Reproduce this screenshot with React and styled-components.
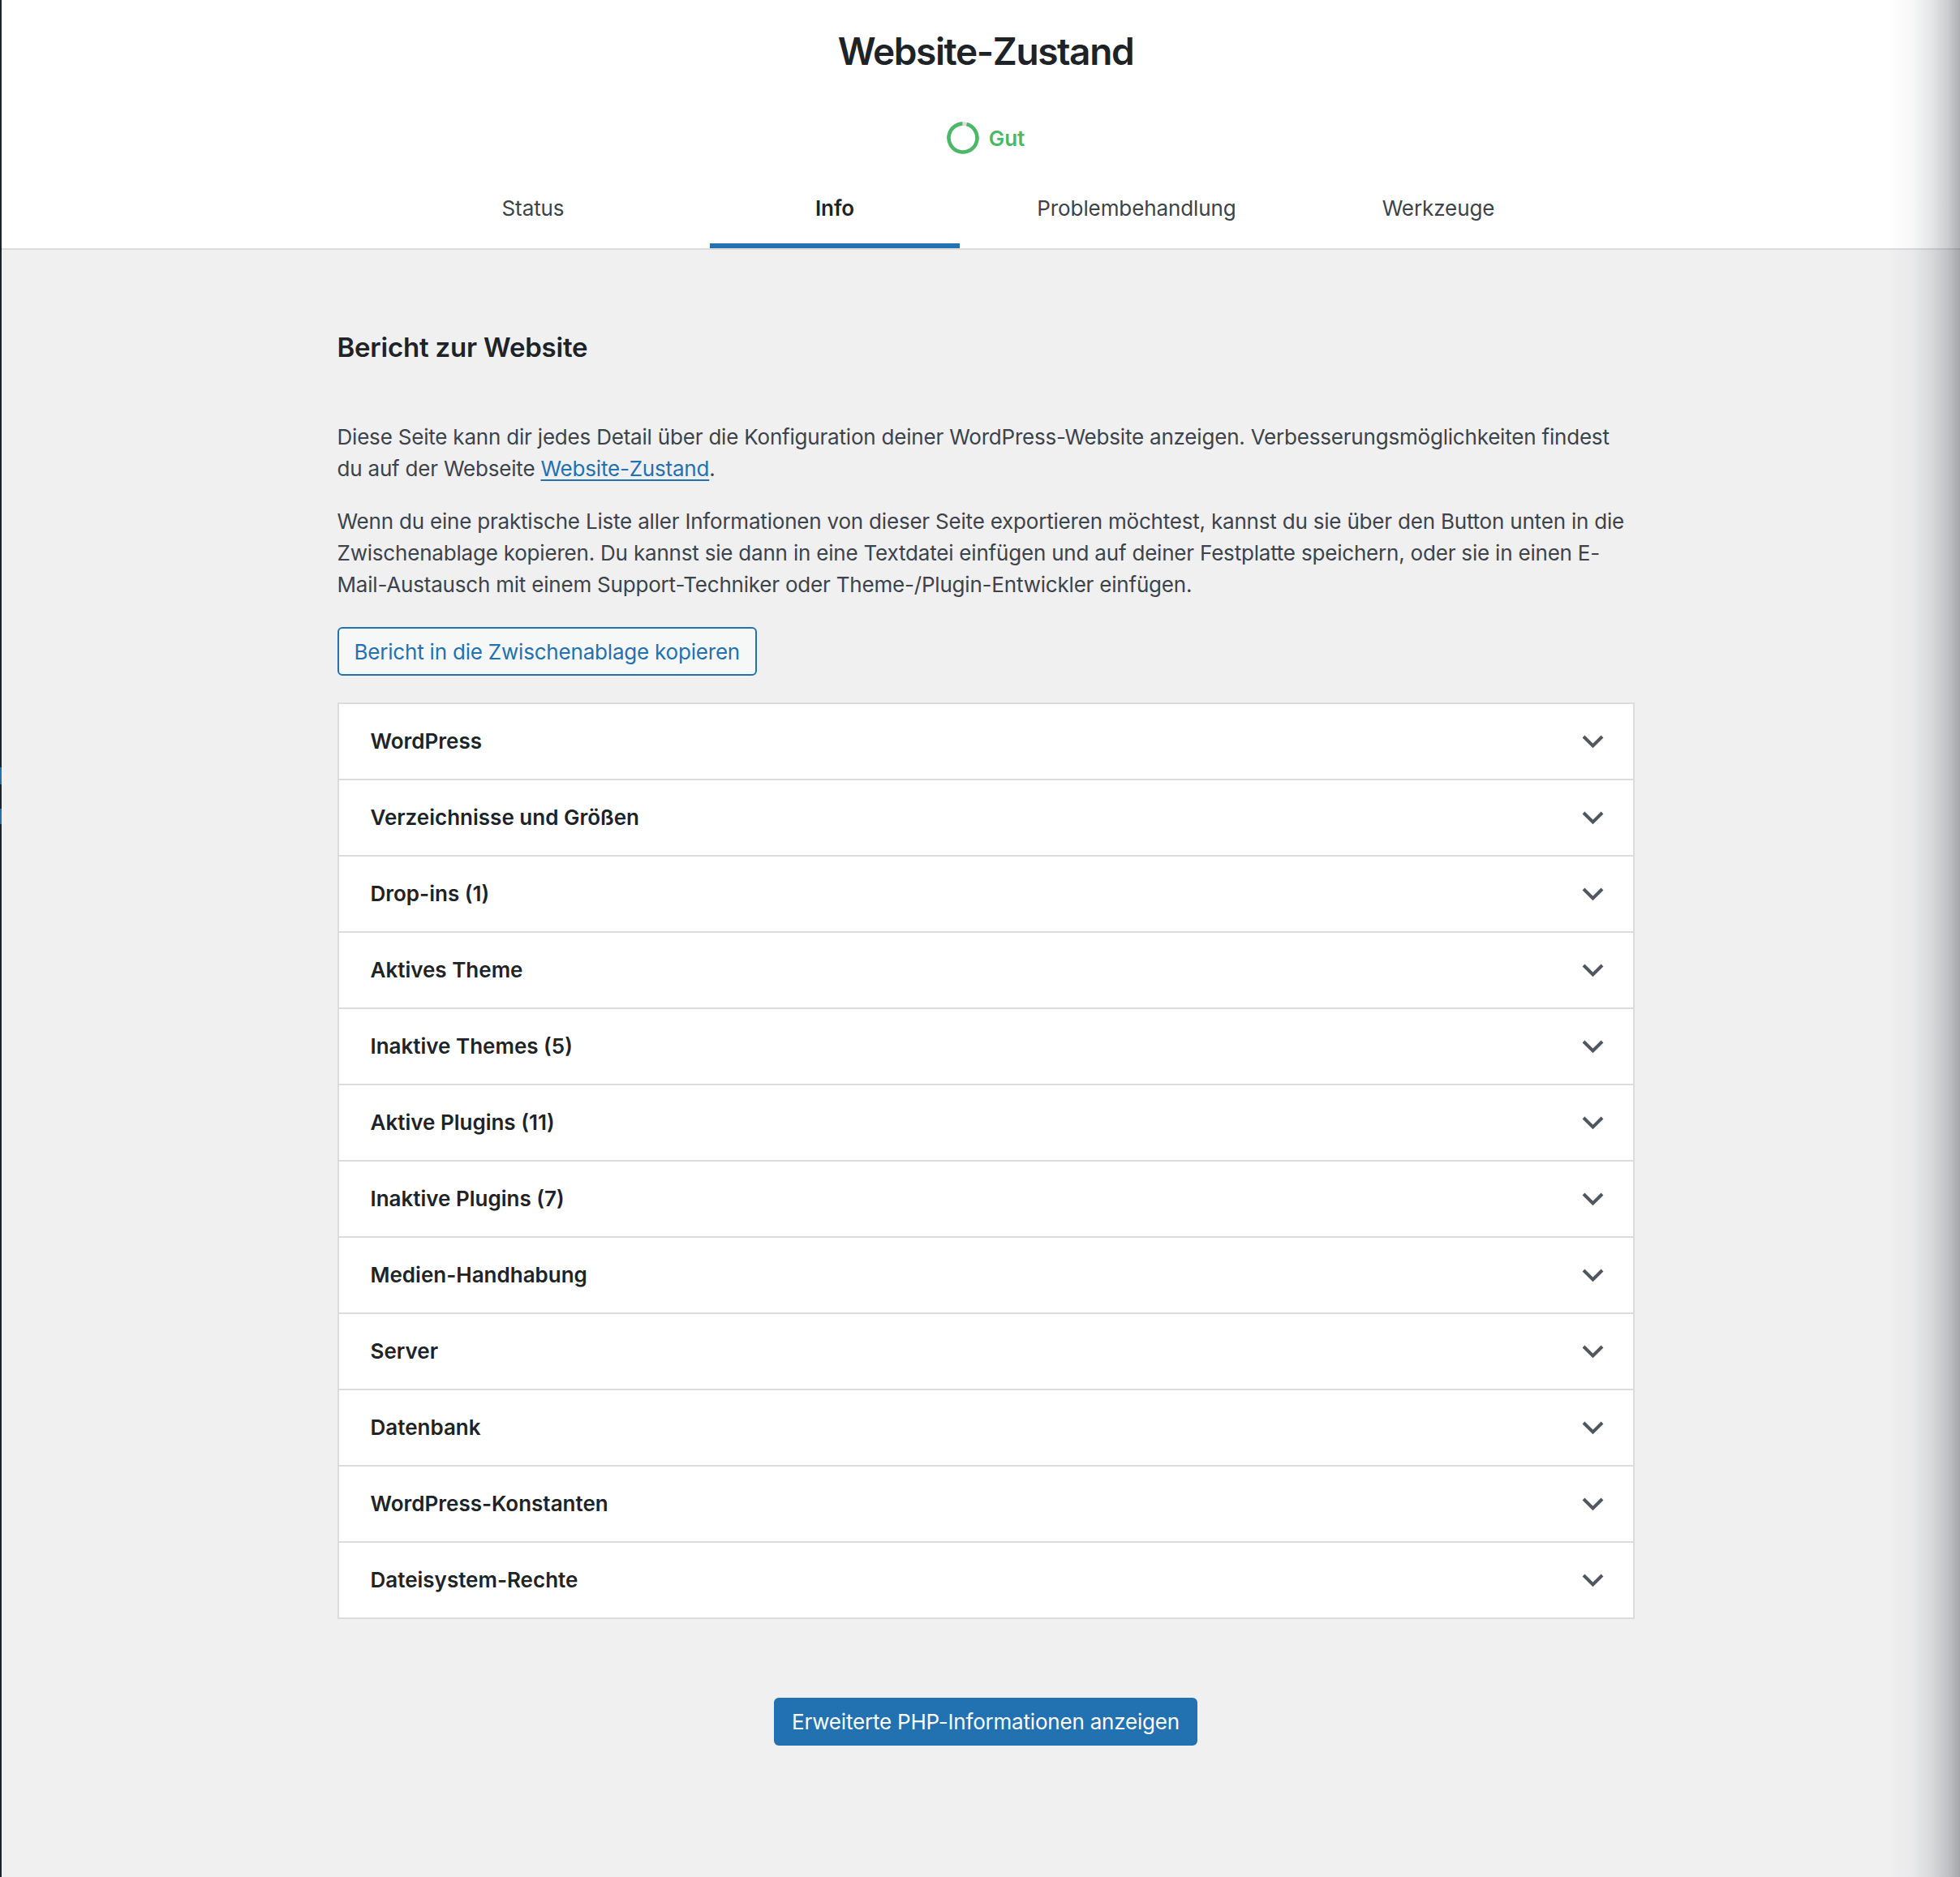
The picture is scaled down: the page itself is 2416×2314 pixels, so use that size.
import React from "react";
import styled, { createGlobalStyle } from "styled-components";

const GlobalStyle = createGlobalStyle`
  html, body {
    margin: 0;
    padding: 0;
    background: #f0f0f1;
  }
  body {
    font-family: Inter, "Noto Sans", "Liberation Sans", sans-serif;
    color: #3c434a;
  }
  * {
    box-sizing: border-box;
  }
`;

const Page = styled.div`
  position: relative;
  display: flex;
  min-height: 100vh;
  overflow: hidden;
`;

const AdminEdge = styled.div`
  width: 2px;
  flex: 0 0 2px;
  background: #1d2327;
  position: relative;
`;

const EdgeMark = styled.span`
  position: absolute;
  left: 0;
  width: 2px;
  top: ${(p) => p.$top}px;
  height: ${(p) => p.$height}px;
  background: #2271b1;
`;

const Main = styled.div`
  flex: 1;
  display: flex;
  flex-direction: column;
`;

const Header = styled.header`
  background: #fff;
  border-bottom: 2px solid #dcdcde;
  padding: 33px 0 0 12px;
  display: flex;
  flex-direction: column;
  align-items: center;
`;

const Title = styled.h1`
  margin: 0;
  font-size: 46px;
  line-height: 60px;
  font-weight: 600;
  letter-spacing: -1.4px;
  color: #1d2327;
`;

const Progress = styled.div`
  margin-top: 57px;
  height: 40px;
  display: flex;
  align-items: center;
  gap: 12px;
`;

const ProgressLabel = styled.span`
  font-size: 26px;
  font-weight: 600;
  color: #4ab866;
`;

const Tabs = styled.nav`
  margin-top: 31px;
  display: grid;
  grid-template-columns: repeat(4, 372px);
`;

const Tab = styled.a`
  margin: 0 32px;
  padding: 16px 0 24px;
  text-align: center;
  font-size: 26px;
  line-height: 39px;
  letter-spacing: -0.1px;
  text-decoration: none;
  color: ${(p) => (p.$active ? "#1d2327" : "#3c434a")};
  font-weight: ${(p) => (p.$active ? 600 : 400)};
  border-bottom: 6px solid ${(p) => (p.$active ? "#2271b1" : "transparent")};
`;

const Body = styled.main`
  width: 1611px;
  margin: 0 auto;
  padding: 99px 0 160px 12px;
`;

const SectionTitle = styled.h2`
  margin: 0;
  font-size: 33px;
  line-height: 42px;
  font-weight: 600;
  letter-spacing: -0.2px;
  color: #1d2327;
`;

const Text = styled.p`
  margin: ${(p) => (p.$first ? "70px" : "26px")} 0 0;
  font-size: 26px;
  line-height: 39px;
  letter-spacing: -0.2px;
  color: #3c434a;
`;

const Link = styled.a`
  color: #2271b1;
  text-decoration: underline;
  text-decoration-thickness: 2px;
  text-underline-offset: 4px;
`;

const OutlineButton = styled.button`
  margin-top: 33px;
  align-self: flex-start;
  height: 60px;
  padding: 0 19px;
  font-family: inherit;
  font-size: 26px;
  letter-spacing: -0.2px;
  color: #2271b1;
  background: #f6f7f7;
  border: 2px solid #2271b1;
  border-radius: 6px;
`;

const Accordion = styled.div`
  margin-top: 33px;
  background: #fff;
  border: 2px solid #dcdcde;
`;

const AccordionRow = styled.div`
  display: flex;
  align-items: center;
  justify-content: space-between;
  padding: 26px 36px 26px 39px;
  border-top: ${(p) => (p.$first ? "none" : "2px solid #dcdcde")};
`;

const RowTitle = styled.h3`
  margin: 0;
  font-size: 26px;
  line-height: 40px;
  font-weight: 600;
  color: #1d2327;
`;

const Footer = styled.div`
  margin-top: 97px;
  display: flex;
  justify-content: center;
`;

const PrimaryButton = styled.button`
  height: 59px;
  padding: 0 20px;
  font-family: inherit;
  font-size: 26px;
  letter-spacing: -0.2px;
  color: #fff;
  background: #2271b1;
  border: 2px solid #2271b1;
  border-radius: 6px;
`;

const EdgeShadow = styled.div`
  position: absolute;
  top: 0;
  right: 0;
  bottom: 0;
  width: 90px;
  pointer-events: none;
  background: linear-gradient(
    to right,
    rgba(60, 67, 74, 0) 0%,
    rgba(60, 67, 74, 0.04) 35%,
    rgba(60, 67, 74, 0.13) 60%,
    rgba(60, 67, 74, 0.26) 82%,
    rgba(60, 67, 74, 0.42) 100%
  );
`;

const sections = [
  "WordPress",
  "Verzeichnisse und Größen",
  "Drop-ins (1)",
  "Aktives Theme",
  "Inaktive Themes (5)",
  "Aktive Plugins (11)",
  "Inaktive Plugins (7)",
  "Medien-Handhabung",
  "Server",
  "Datenbank",
  "WordPress-Konstanten",
  "Dateisystem-Rechte",
];

function ProgressRing() {
  return (
    <svg width="40" height="40" viewBox="0 0 40 40">
      <circle cx="20" cy="20" r="17.5" fill="none" stroke="#dcdcde" strokeWidth="4.5" />
      <circle
        cx="20"
        cy="20"
        r="17.5"
        fill="none"
        stroke="#4ab866"
        strokeWidth="4.5"
        strokeDasharray="104 110"
        transform="rotate(-75 20 20)"
      />
    </svg>
  );
}

function Chevron() {
  return (
    <svg width="27" height="17" viewBox="0 0 27 17">
      <polyline points="2,2 13.5,13.5 25,2" fill="none" stroke="#50575e" strokeWidth="4" />
    </svg>
  );
}

export default function App() {
  return (
    <>
      <GlobalStyle />
      <Page>
        <AdminEdge>
          <EdgeMark $top={946} $height={21} />
          <EdgeMark $top={997} $height={19} />
        </AdminEdge>
        <Main>
          <Header>
            <Title>Website-Zustand</Title>
            <Progress>
              <ProgressRing />
              <ProgressLabel>Gut</ProgressLabel>
            </Progress>
            <Tabs>
              <Tab href="#">Status</Tab>
              <Tab href="#" $active>
                Info
              </Tab>
              <Tab href="#">Problembehandlung</Tab>
              <Tab href="#">Werkzeuge</Tab>
            </Tabs>
          </Header>
          <Body>
            <SectionTitle>Bericht zur Website</SectionTitle>
            <Text $first>
              Diese Seite kann dir jedes Detail über die Konfiguration deiner
              WordPress-Website anzeigen. Verbesserungsmöglichkeiten findest du
              auf der Webseite <Link href="#">Website-Zustand</Link>.
            </Text>
            <Text>
              Wenn du eine praktische Liste aller Informationen von dieser Seite
              exportieren möchtest, kannst du sie über den Button unten in die
              Zwischenablage kopieren. Du kannst sie dann in eine Textdatei
              einfügen und auf deiner Festplatte speichern, oder sie in einen
              E-Mail-Austausch mit einem Support-Techniker oder
              Theme-/Plugin-Entwickler einfügen.
            </Text>
            <OutlineButton>Bericht in die Zwischenablage kopieren</OutlineButton>
            <Accordion>
              {sections.map((name, i) => (
                <AccordionRow key={name} $first={i === 0}>
                  <RowTitle>{name}</RowTitle>
                  <Chevron />
                </AccordionRow>
              ))}
            </Accordion>
            <Footer>
              <PrimaryButton>Erweiterte PHP-Informationen anzeigen</PrimaryButton>
            </Footer>
          </Body>
        </Main>
        <EdgeShadow />
      </Page>
    </>
  );
}
